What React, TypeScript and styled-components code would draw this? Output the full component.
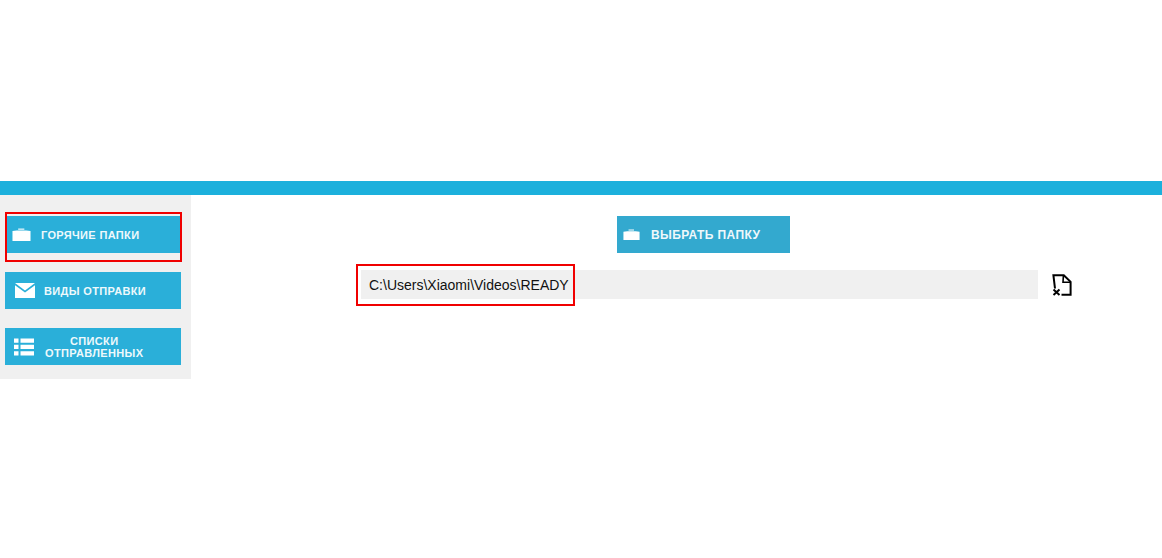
import { createGlobalStyle, styled } from "styled-components";

const GlobalStyle = createGlobalStyle`
  html, body {
    margin: 0;
    padding: 0;
    background: #fff;
    font-family: "Liberation Sans", Arial, sans-serif;
  }
`;

const FolderIcon = ({ width }: { width: number }) => (
  <svg width={width} viewBox="0 0 20 14" fill="#fff">
    <path d="M6.5 0.6h6.5v1.2H6.5z" />
    <path d="M0.5 3.2 5 2.6h10l4.5 0.6v10.4H0.5z" />
  </svg>
);

const MailIcon = () => (
  <svg width="20" height="15" viewBox="0 0 20 15" fill="#fff">
    <path d="M0 0h20L10 7.4z" />
    <path d="M0 2.2 10 9.6 20 2.2V15H0z" />
  </svg>
);

const ListIcon = () => (
  <svg width="20" height="18" viewBox="0 0 20 18" fill="#fff">
    <path d="M0 0.5h4.5v4.2H0zM6.5 0.5H20v4.2H6.5z" />
    <path d="M0 6.8h4.5V11H0zM6.5 6.8H20V11H6.5z" />
    <path d="M0 13.2h4.5v4.2H0zM6.5 13.2H20v4.2H6.5z" />
  </svg>
);

const FileXIcon = () => (
  <svg width="20" height="22" viewBox="0 0 20 22" fill="none" stroke="#000" strokeWidth="2">
    <path d="M3 14.5 1.4 1.2h10.4l6.8 6.6v13H9.5" />
    <path d="M11.4 1.5 11 8.2h7.4" strokeWidth="1.6" />
    <path d="M1.5 15.5 7.5 21M7.5 15.5 1.5 21" />
  </svg>
);

export default function App() {
  return (
    <Page>
      <GlobalStyle />
      <TopBar />
      <Body>
        <Sidebar>
          <Highlighted>
            <SideButton>
              <IconSlot $left={7}>
                <FolderIcon width={19} />
              </IconSlot>
              <SideLabel $left={10}>ГОРЯЧИЕ ПАПКИ</SideLabel>
            </SideButton>
            <RedFrame $top={-4} $left={0} $width={177} $height={50} />
          </Highlighted>
          <SideButton>
            <IconSlot $left={10}>
              <MailIcon />
            </IconSlot>
            <SideLabel $left={9}>ВИДЫ ОТПРАВКИ</SideLabel>
          </SideButton>
          <SideButton>
            <IconSlot $left={9}>
              <ListIcon />
            </IconSlot>
            <SideLabel $left={11} $center>
              СПИСКИ
              <br />
              ОТПРАВЛЕННЫХ
            </SideLabel>
          </SideButton>
        </Sidebar>
        <Main>
          <SelectButton>
            <IconSlot $left={6}>
              <FolderIcon width={17} />
            </IconSlot>
            <SelectLabel>ВЫБРАТЬ ПАПКУ</SelectLabel>
          </SelectButton>
          <PathRow>
            <PathField>
              C:\Users\Xiaomi\Videos\READY
              <RedFrame $top={-6} $left={-5} $width={219} $height={42} />
            </PathField>
            <ClearButton>
              <FileXIcon />
            </ClearButton>
          </PathRow>
        </Main>
      </Body>
    </Page>
  );
}

const Page = styled.div`
  width: 1162px;
  height: 558px;
  padding-top: 181px;
  box-sizing: border-box;
  overflow: hidden;
`;

const TopBar = styled.div`
  height: 14px;
  background: #1cb0dc;
`;

const Body = styled.div`
  display: flex;
`;

const Sidebar = styled.div`
  width: 191px;
  height: 184px;
  box-sizing: border-box;
  padding: 21px 10px 0 5px;
  background: #f0f0f0;
  display: flex;
  flex-direction: column;
  gap: 19px;
`;

const Highlighted = styled.div`
  position: relative;
`;

const RedFrame = styled.div<{ $top: number; $left: number; $width: number; $height: number }>`
  position: absolute;
  top: ${(p) => p.$top}px;
  left: ${(p) => p.$left}px;
  width: ${(p) => p.$width}px;
  height: ${(p) => p.$height}px;
  box-sizing: border-box;
  border: 2px solid #f00000;
`;

const SideButton = styled.div`
  width: 176px;
  height: 37px;
  background: #2aafd9;
  color: #fff;
  display: flex;
  align-items: center;
`;

const IconSlot = styled.span<{ $left: number }>`
  display: flex;
  margin-left: ${(p) => p.$left}px;
  flex-shrink: 0;
`;

const SideLabel = styled.span<{ $left: number; $center?: boolean }>`
  margin-left: ${(p) => p.$left}px;
  font-size: 11px;
  font-weight: 700;
  line-height: 12px;
  letter-spacing: 0.35px;
  white-space: nowrap;
  text-align: ${(p) => (p.$center ? "center" : "left")};
  color: #eef9fc;
`;

const Main = styled.div`
  flex: 1;
  display: flex;
  flex-direction: column;
  padding-top: 21px;
`;

const SelectButton = styled.div`
  width: 173px;
  height: 37px;
  margin-left: 426px;
  background: #33a9cf;
  display: flex;
  align-items: center;
`;

const SelectLabel = styled.span`
  margin-left: 11px;
  font-size: 12px;
  font-weight: 700;
  letter-spacing: 0.4px;
  color: #eef8fb;
  white-space: nowrap;
`;

const PathRow = styled.div`
  display: flex;
  align-items: center;
  margin: 17px 0 0 170px;
`;

const PathField = styled.div`
  position: relative;
  width: 677px;
  height: 29px;
  box-sizing: border-box;
  padding-left: 8px;
  background: #f0f0f0;
  color: #111;
  font-size: 14px;
  line-height: 30px;
  white-space: nowrap;
`;

const ClearButton = styled.div`
  display: flex;
  margin-left: 14px;
`;
